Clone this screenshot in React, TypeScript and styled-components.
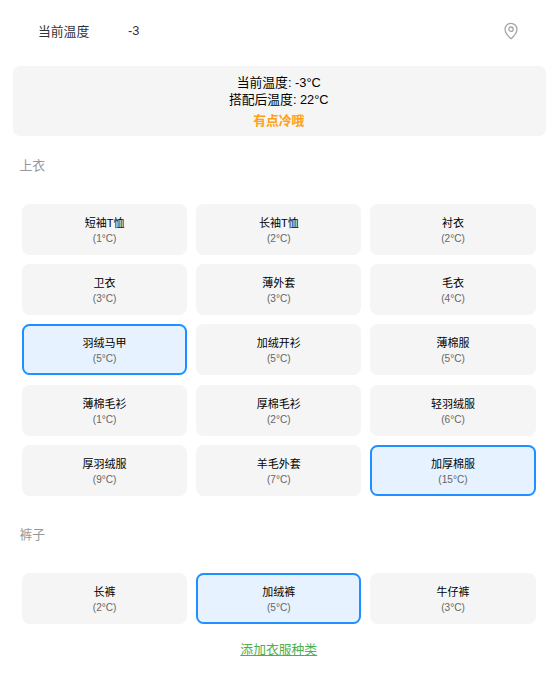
import React from "react";
import styled, { createGlobalStyle } from "styled-components";

const GlobalStyle = createGlobalStyle`
  * { box-sizing: border-box; }
  body {
    margin: 0;
    background: #fff;
    color: #000;
    font-family: "Liberation Sans", "Noto Sans CJK SC", sans-serif;
  }
`;

const Page = styled.main`
  width: 554px;
  height: 674px;
  padding: 9px 8px 0 13px;
  overflow: hidden;
`;

const Field = styled.header`
  display: flex;
  align-items: center;
  height: 43px;
  padding: 0 28.5px 0 25px;
  font-size: 12.8px;
  color: #323233;
`;

const FieldLabel = styled.label`
  width: 90px;
`;

const FieldValue = styled.span`
  flex: 1;
`;

const Summary = styled.section`
  display: flex;
  flex-direction: column;
  align-items: center;
  height: 70px;
  margin-top: 14px;
  padding: 8px 1.5px 0 0;
  border-radius: 7px;
  background: #f5f5f5;
  font-size: 12.8px;
  line-height: 17px;
`;

const Verdict = styled.strong`
  margin-top: 4px;
  color: #ff9f1a;
`;

const Groups = styled.div`
  display: flex;
  flex-direction: column;
  gap: 29px;
  padding-top: 20px;
`;

const GroupTitle = styled.h2`
  height: 20px;
  margin: 0 0 0 6.5px;
  font-size: 12.8px;
  font-weight: 400;
  line-height: 20px;
  color: #969799;
`;

const Grid = styled.div`
  display: grid;
  grid-template-columns: repeat(3, 1fr);
  grid-auto-rows: 51px;
  gap: 9.3px 9px;
  margin: 27.8px 10.4px 0 9px;
`;

const Card = styled.button<{ $selected: boolean }>`
  display: flex;
  flex-direction: column;
  align-items: center;
  justify-content: center;
  padding: 3px 0 0;
  border: 2px solid ${(p) => (p.$selected ? "#1e90ff" : "transparent")};
  border-radius: 7.5px;
  background: ${(p) => (p.$selected ? "#e6f2ff" : "#f5f5f5")};
  color: #000;
  font-family: inherit;
`;

const Name = styled.span`
  font-size: 11px;
  line-height: 16px;
`;

const Degrees = styled.span`
  font-size: 10.1px;
  line-height: 16px;
  color: #666;
`;

const AddLink = styled.a`
  display: block;
  margin: 16px 1.5px 0 0;
  text-align: center;
  font-size: 12.8px;
  line-height: 20px;
  color: #4caf50;
  text-decoration: underline;
`;

type Item = [name: string, degrees: number, selected?: boolean];

const groups: { title: string; items: Item[] }[] = [
  {
    title: "上衣",
    items: [
      ["短袖T恤", 1], ["长袖T恤", 2], ["衬衣", 2],
      ["卫衣", 3], ["薄外套", 3], ["毛衣", 4],
      ["羽绒马甲", 5, true], ["加绒开衫", 5], ["薄棉服", 5],
      ["薄棉毛衫", 1], ["厚棉毛衫", 2], ["轻羽绒服", 6],
      ["厚羽绒服", 9], ["羊毛外套", 7], ["加厚棉服", 15, true],
    ],
  },
  { title: "裤子", items: [["长裤", 2], ["加绒裤", 5, true], ["牛仔裤", 3]] },
];

const PinIcon = () => (
  <svg width="14" height="18" viewBox="0 0 14 18" fill="none" stroke="#a5a6a8" strokeWidth="1.3">
    <path d="M7 16.7C5 15 1.1 11.3 1.1 7.2a5.9 5.9 0 0 1 11.8 0c0 4.1-3.9 7.8-5.9 9.5Z" />
    <circle cx="7" cy="7.2" r="2.2" />
  </svg>
);

export default function App() {
  return (
    <>
      <GlobalStyle />
      <Page>
        <Field>
          <FieldLabel>当前温度</FieldLabel>
          <FieldValue>-3</FieldValue>
          <PinIcon />
        </Field>
        <Summary>
          <span>当前温度: -3°C</span>
          <span>搭配后温度: 22°C</span>
          <Verdict>有点冷哦</Verdict>
        </Summary>
        <Groups>
          {groups.map((group) => (
            <section key={group.title}>
              <GroupTitle>{group.title}</GroupTitle>
              <Grid>
                {group.items.map(([name, degrees, selected]) => (
                  <Card key={name} $selected={!!selected}>
                    <Name>{name}</Name>
                    <Degrees>({degrees}°C)</Degrees>
                  </Card>
                ))}
              </Grid>
            </section>
          ))}
        </Groups>
        <AddLink>添加衣服种类</AddLink>
      </Page>
    </>
  );
}
